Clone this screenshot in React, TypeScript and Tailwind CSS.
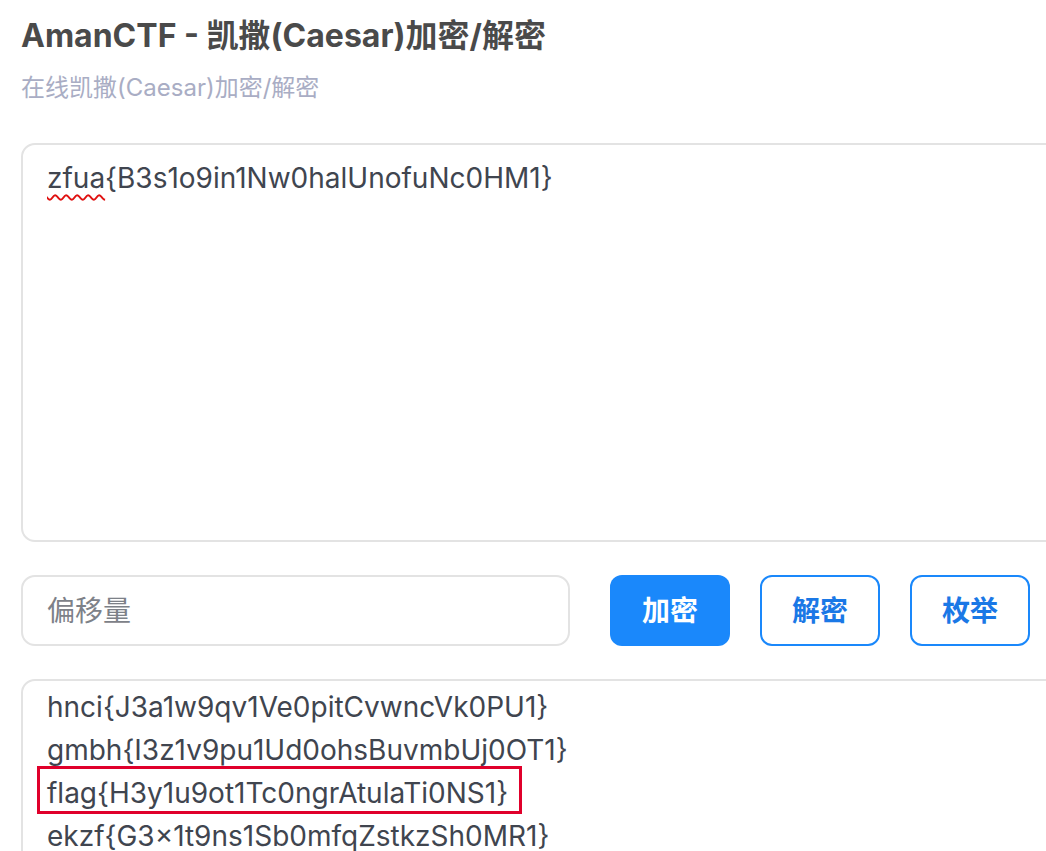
import React, { useLayoutEffect, useRef } from "react";

const INPUT = "zfua{B3s1o9in1Nw0halUnofuNc0HM1}";

function shift(s: string, k: number): string {
  return s
    .split("")
    .map((c) => {
      const code = c.charCodeAt(0);
      if (code >= 65 && code <= 90) return String.fromCharCode(((code - 65 + k) % 26) + 65);
      if (code >= 97 && code <= 122) return String.fromCharCode(((code - 97 + k) % 26) + 97);
      return c;
    })
    .join("");
}

const shifts: number[] = [];
for (let k = 25; k >= 1; k--) shifts.push(k);

export default function App() {
  const outRef = useRef<HTMLDivElement>(null);
  useLayoutEffect(() => {
    if (outRef.current) outRef.current.scrollTop = 738;
  }, []);

  const font = { fontFamily: 'Inter, "Noto Sans CJK SC", sans-serif' };

  return (
    <div className="h-screen w-screen overflow-hidden bg-white" style={font}>
      <div className="w-[1140px] pl-[21px] pt-[14px]">
        <h1 className="text-[32px] font-bold leading-[44px] text-[#4a4a4a]">
          AmanCTF - 凯撒(Caesar)加密/解密
        </h1>
        <p className="mt-[14px] text-[24px] leading-[32px] text-[#a9adc4]">
          在线凯撒(Caesar)加密/解密
        </p>

        <div className="mt-[39px] h-[399px] rounded-[14px] border-2 border-[#e3e3e3] px-[24px] py-[12px] text-[28px] leading-[43px] text-[#40454f]">
          <span className="underline decoration-wavy decoration-[#e01010] decoration-[1.5px] underline-offset-[6px]">
            zfua
          </span>
          {INPUT.slice(4)}
        </div>

        <div className="mt-[33px] flex items-center">
          <div className="flex h-[71px] w-[549px] items-center rounded-[14px] border-2 border-[#e3e3e3] px-[24px] text-[28px] text-[#7d8188]">
            偏移量
          </div>
          <button className="ml-[40px] h-[71px] w-[120px] rounded-[12px] bg-[#1a88fb] text-[28px] font-bold text-white">
            加密
          </button>
          <button className="ml-[30px] h-[71px] w-[120px] rounded-[12px] border-2 border-[#1a88fb] bg-white text-[28px] font-bold text-[#1a78e6]">
            解密
          </button>
          <button className="ml-[30px] h-[71px] w-[120px] rounded-[12px] border-2 border-[#1a88fb] bg-white text-[28px] font-bold text-[#1a78e6]">
            枚举
          </button>
        </div>

        <div
          ref={outRef}
          className="mt-[33px] h-[220px] overflow-hidden rounded-[14px] border-2 border-[#e3e3e3] px-[24px] py-[12px] text-[28px] leading-[43px] text-[#40454f]"
        >
          {shifts.map((k) => (
            <div key={k} className="whitespace-nowrap">
              {k === 6 ? (
                <span className="relative inline-block">
                  {shift(INPUT, k)}
                  <span className="absolute top-[-6px] bottom-[1px] left-[-10px] right-[-14px] border-[3px] border-[#e0002b]" />
                </span>
              ) : (
                shift(INPUT, k)
              )}
            </div>
          ))}
        </div>
      </div>
    </div>
  );
}
